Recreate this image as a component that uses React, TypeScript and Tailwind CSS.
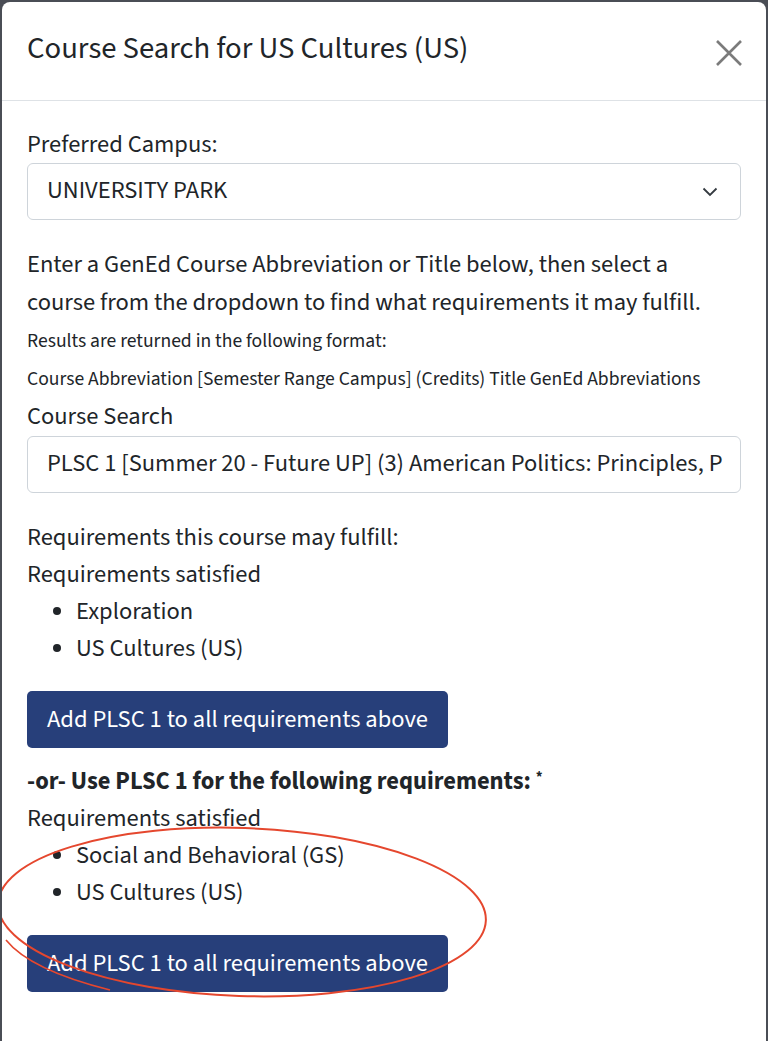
import React from "react";

const font = { fontFamily: '"Source Sans Pro", "Source Sans 3", Lato, "Noto Sans", sans-serif' };

function Bullets({ items }: { items: string[] }) {
  return (
    <ul className="list-disc pl-[49px] text-[24.5px] leading-[37px]">
      {items.map((t) => (
        <li key={t}>{t}</li>
      ))}
    </ul>
  );
}

function AddButton() {
  return (
    <button className="h-[57px] px-[20px] pt-[2px] bg-[#273f7a] text-white text-[24.5px] rounded-[5px] self-start">
      Add PLSC 1 to all requirements above
    </button>
  );
}

export default function App() {
  return (
    <div className="min-h-screen bg-[#4a4d55] px-[2px] pt-[2px]" style={font}>
      <div className="relative bg-white rounded-t-[8px] min-h-[1039px] text-[#212529] overflow-hidden">
        <div className="h-[99px] px-[25px] flex items-center justify-between border-b border-[#dee2e6]">
          <h1 className="text-[30.7px] leading-none mt-[-4px]">Course Search for US Cultures (US)</h1>
          <svg width="26" height="26" viewBox="0 0 26 26" className="mr-[-1px] mt-[4px]">
            <path d="M1 1 L25 25 M25 1 L1 25" stroke="#7b7b7b" strokeWidth="2.6" fill="none" />
          </svg>
        </div>
        <div className="px-[25px] pt-[26px] flex flex-col">
          <div className="text-[24.5px] leading-[36px]">Preferred Campus:</div>
          <div className="h-[57px] border border-[#ced4da] rounded-[6px] flex items-center justify-between pl-[19px] pr-[22px]">
            <span className="text-[24.5px]">UNIVERSITY PARK</span>
            <svg width="16" height="10" viewBox="0 0 16 10">
              <polyline points="1.5,1.5 8,8 14.5,1.5" stroke="#343a40" strokeWidth="1.8" fill="none" />
            </svg>
          </div>
          <p className="mt-[26px] text-[24.5px] leading-[38px]">
            Enter a GenEd Course Abbreviation or Title below, then select a
            <br />
            course from the dropdown to find what requirements it may fulfill.
          </p>
          <div className="text-[19.6px] leading-[38px]">Results are returned in the following format:</div>
          <div className="text-[19.6px] leading-[38px]">
            Course Abbreviation [Semester Range Campus] (Credits) Title GenEd Abbreviations
          </div>
          <div className="text-[24.5px] leading-[38px]">Course Search</div>
          <div className="h-[57px] border border-[#ced4da] rounded-[6px] flex items-center pl-[19px] pr-[19px] overflow-hidden">
            <span className="text-[24.5px] whitespace-nowrap">
              PLSC 1 [Summer 20 - Future UP] (3) American Politics: Principles, P
            </span>
          </div>
          <div className="mt-[26px] text-[24.5px] leading-[37px]">Requirements this course may fulfill:</div>
          <div className="text-[24.5px] leading-[37px]">Requirements satisfied</div>
          <Bullets items={["Exploration", "US Cultures (US)"]} />
          <div className="mt-[24px] flex">
            <AddButton />
          </div>
          <div className="mt-[15px] text-[24.5px] leading-[37px] font-bold">
            -or- Use PLSC 1 for the following requirements: <sup className="text-[15px]">*</sup>
          </div>
          <div className="text-[24.5px] leading-[37px]">Requirements satisfied</div>
          <Bullets items={["Social and Behavioral (GS)", "US Cultures (US)"]} />
          <div className="mt-[24px] flex">
            <AddButton />
          </div>
        </div>
        <svg className="absolute left-[-2px] top-[818px] pointer-events-none" width="520" height="190" viewBox="0 0 520 190">
          <ellipse cx="242" cy="92" rx="244" ry="84" transform="rotate(2 242 92)" stroke="#e5472e" strokeWidth="2" fill="none" />
          <path d="M 6 120 Q 30 150 110 170" stroke="#e5472e" strokeWidth="1.6" fill="none" />
        </svg>
      </div>
    </div>
  );
}
